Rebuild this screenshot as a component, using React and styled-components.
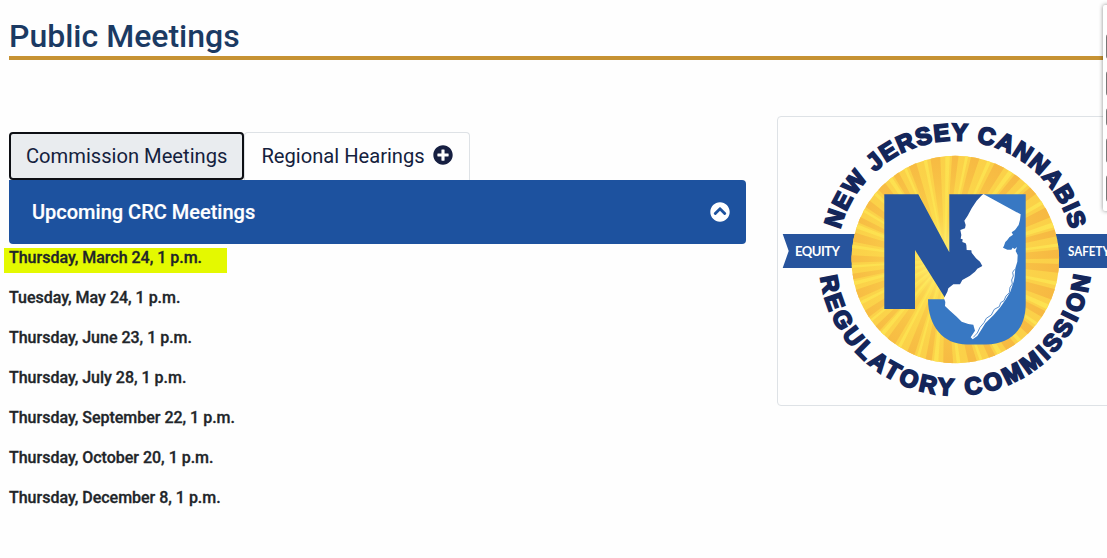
import React from "react"
import styled, { createGlobalStyle } from "styled-components"
import { FaPlusCircle, FaChevronCircleUp } from "react-icons/fa"

const meetings = [
    "Thursday, March 24, 1 p.m.",
    "Tuesday, May 24, 1 p.m.",
    "Thursday, June 23, 1 p.m.",
    "Thursday, July 28, 1 p.m.",
    "Thursday, September 22, 1 p.m.",
    "Thursday, October 20, 1 p.m.",
    "Thursday, December 8, 1 p.m.",
]

//sun rays, wedges of uneven width around the middle of the seal
const rays = () => {
    const cx = 945, cy = 260, r = 130
    const widths = [4.5, 2, 5.5, 2.5, 3.5, 1.6]
    const out = []
    let a = 2
    let i = 0
    while (a < 358) {
        const w = widths[i % widths.length]
        const p = (deg) => {
            const t = (deg * Math.PI) / 180
            return `${(cx + r * Math.cos(t)).toFixed(1)} ${(cy + r * Math.sin(t)).toFixed(1)}`
        }
        out.push(<path key={i} d={`M${cx} ${cy}L${p(a)}L${p(a + w)}Z`} fill={i % 2 === 1 ? "#fde552" : "#f6b742"} />)
        a += w + widths[(i + 2) % widths.length] * 0.8
        i++
    }
    return out
}

const Seal = () => (
    <SealSvg viewBox="778 117 400 288" role="img" aria-label="New Jersey Cannabis Regulatory Commission">
        <defs>
            <clipPath id="sun"><circle cx="955.3" cy="259.5" r="103.8" /></clipPath>
            <radialGradient id="glow" gradientUnits="userSpaceOnUse" cx="945" cy="260" r="112">
                <stop offset="0" stopColor="#fff27a" />
                <stop offset="0.4" stopColor="#fde552" stopOpacity="0.55" />
                <stop offset="1" stopColor="#fbcb45" stopOpacity="0.1" />
            </radialGradient>
            <path id="topArc" d="M836.3 259.5A119 119 0 0 1 1074.3 259.5" />
            <path id="bottomArc" d="M819.3 259.5A136 136 0 0 0 1091.3 259.5" />
        </defs>
        <path d="M782.7 234H860V268H782.7L788.7 251ZM1050 234H1130V268H1050Z" fill="#27549d" />
        <g clipPath="url(#sun)">
            <rect x="850" y="150" width="212" height="220" fill="#fbd149" />
            {rays()}
            <rect x="850" y="150" width="212" height="220" fill="url(#glow)" />
        </g>
        <path d="M980 194.3H1025.7V304C1025.7 330 1010 344.5 986 344.5H967C943 344.5 928 326 928 299.3H980Z" fill="#3878c3" />
        <path d="M884.3 194.3H918.3L949.3 252.3V194.3H984L990 297H944.5L915 250V309H884.3Z" fill="#27549d" />
        <g transform="translate(920 180) scale(0.3333)">
            <path fill="#fff" d="M190 42L302 103L300 120L296 135L285 150L275 157L279 164L268 172L262 180L256 186L252 197L249 203L262 209L274 209L278 203L284 207L291 201L287 213L293 225L292 245L286 265L284 290L281 305L271 335L256 360L241 382L221 405L196 430L185 448L172 468L158 478L152 472L165 452L160 434L145 432L125 425L110 410L90 392L75 378L76 366L72 355L82 335L85 325L100 313L120 313L127 300L150 287L160 279L165 275L172 266L187 258L180 245L168 235L155 218L154 211L140 210L139 195L137 190L127 186L128 178L122 176L124 165L121 150L135 145L137 135L133 122L143 107L155 85L170 62L184 47Z" />
            <path fill="none" stroke="#3878c3" strokeWidth="2.5" d="M284 268L278 277L280 288L275 300L277 312L270 322L268 338L258 348L252 362L242 368L238 380L223 388L214 405L199 415L192 428L180 442L172 459L160 472" />
        </g>
        <ArcText><textPath href="#topArc" startOffset="30.5" textLength="313">NEW JERSEY CANNABIS</textPath></ArcText>
        <ArcText><textPath href="#bottomArc" startOffset="17.5" textLength="393">REGULATORY COMMISSION</textPath></ArcText>
        <RibbonText x="795" y="256.3" textLength="45">EQUITY</RibbonText>
        <RibbonText x="1068" y="256.3" textLength="42" lengthAdjust="spacingAndGlyphs">SAFETY</RibbonText>
    </SealSvg>
)

const App = () => {
    return (
        <>
            <GlobalStyle />
            <Page>
                <Title>Public Meetings</Title>
                <Columns>
                    <Main>
                        <Tabs>
                            <Tab $active>Commission Meetings</Tab>
                            <Tab>Regional Hearings <FaPlusCircle size={20} /></Tab>
                        </Tabs>
                        <AccordionHeader>
                            <h2>Upcoming CRC Meetings</h2>
                            <FaChevronCircleUp size={20} />
                        </AccordionHeader>
                        <MeetingList>
                            {meetings.map((meeting, i) => (
                                <Meeting key={meeting} $highlight={i === 0}>{meeting}</Meeting>
                            ))}
                        </MeetingList>
                    </Main>
                    <SealCard><Seal /></SealCard>
                </Columns>
                <ShareBar>
                    <ShareButton $h={25} />
                    <ShareButton $h={25} />
                    <ShareButton $h={18} />
                    <ShareButton $h={25} />
                    <ShareButton $h={27} />
                </ShareBar>
            </Page>
        </>
    )
}

const GlobalStyle = createGlobalStyle`
*{
    box-sizing: border-box;
}
body{
    margin: 0;
    background: #fefefe;
    font-family: Roboto, "Liberation Sans", sans-serif;
    color: #212529;
}
`
const Page = styled.div`
position: relative;
width: 1107px;
height: 558px;
overflow: hidden;
padding: 16px 0 0 9px;
`
const Title = styled.h1`
margin: 0;
height: 44px;
border-bottom: 4px solid #c69233;
font-size: 32px;
font-weight: 500;
line-height: 40px;
color: #1b3a63;
`
const Columns = styled.div`
display: flex;
gap: 31px;
padding-top: 56px;
`
const Main = styled.main`
flex: 0 0 737px;
padding-top: 16px;
`
const Tabs = styled.div`
display: flex;
height: 48px;
`
const Tab = styled.button`
display: flex;
align-items: center;
gap: 8.5px;
height: 48px;
padding: ${(p) => (p.$active ? "0 15px" : "0 16px 1px")};
font: 400 20.15px Roboto, sans-serif;
color: #14213d;
background: ${(p) => (p.$active ? "#e9ecef" : "#fefefe")};
border: ${(p) => (p.$active ? "2px solid #0d0f14" : "1px solid #dee2e6")};
border-bottom-width: ${(p) => (p.$active ? "2px" : "0")};
border-radius: ${(p) => (p.$active ? "4px" : "4px 4px 0 0")};
svg{
    margin-bottom: 2px;
    color: #161f41;
}
`
const AccordionHeader = styled.div`
display: flex;
align-items: center;
justify-content: space-between;
height: 64px;
padding: 0 16px 0 23px;
border-radius: 0 4px 4px 4px;
background: #1d529f;
color: #fff;
h2{
    margin: 0;
    font-size: 20px;
    font-weight: 500;
    -webkit-text-stroke: 0.2px #fff;
}
`
const MeetingList = styled.ul`
display: flex;
flex-direction: column;
align-items: flex-start;
gap: 15px;
margin: 0;
padding: 4px 0 0;
list-style: none;
`
const Meeting = styled.li`
height: 25px;
margin-left: -5px;
padding: 0 25px 0 5px;
font-size: 16px;
font-weight: 500;
line-height: 20px;
letter-spacing: -0.01px;
-webkit-text-stroke: 0.3px #212529;
background: ${(p) => (p.$highlight ? "#e4f900" : "transparent")};
`
const SealCard = styled.aside`
flex: 0 0 402px;
height: 290px;
border: 1px solid #dee2e6;
border-radius: 4px;
overflow: hidden;
`
const SealSvg = styled.svg`
display: block;
width: 400px;
height: 288px;
`
const ArcText = styled.text`
font: 700 24px "Liberation Sans", sans-serif;
fill: #14265a;
stroke: #14265a;
stroke-width: 1.9px;
`
const RibbonText = styled.text`
font: 700 13px Lato, sans-serif;
fill: #fff;
`
//floating over the right edge
const ShareBar = styled.div`
position: absolute;
top: 5px;
left: 1103px;
width: 60px;
height: 206px;
padding: 29px 0 0 3px;
display: flex;
flex-direction: column;
gap: 12px;
background: #fff;
border-radius: 2px;
box-shadow: 0 0 4px rgba(0,0,0,0.45);
`
const ShareButton = styled.div`
height: ${(p) => p.$h}px;
border-radius: 3px;
background: #777;
`
export default App
